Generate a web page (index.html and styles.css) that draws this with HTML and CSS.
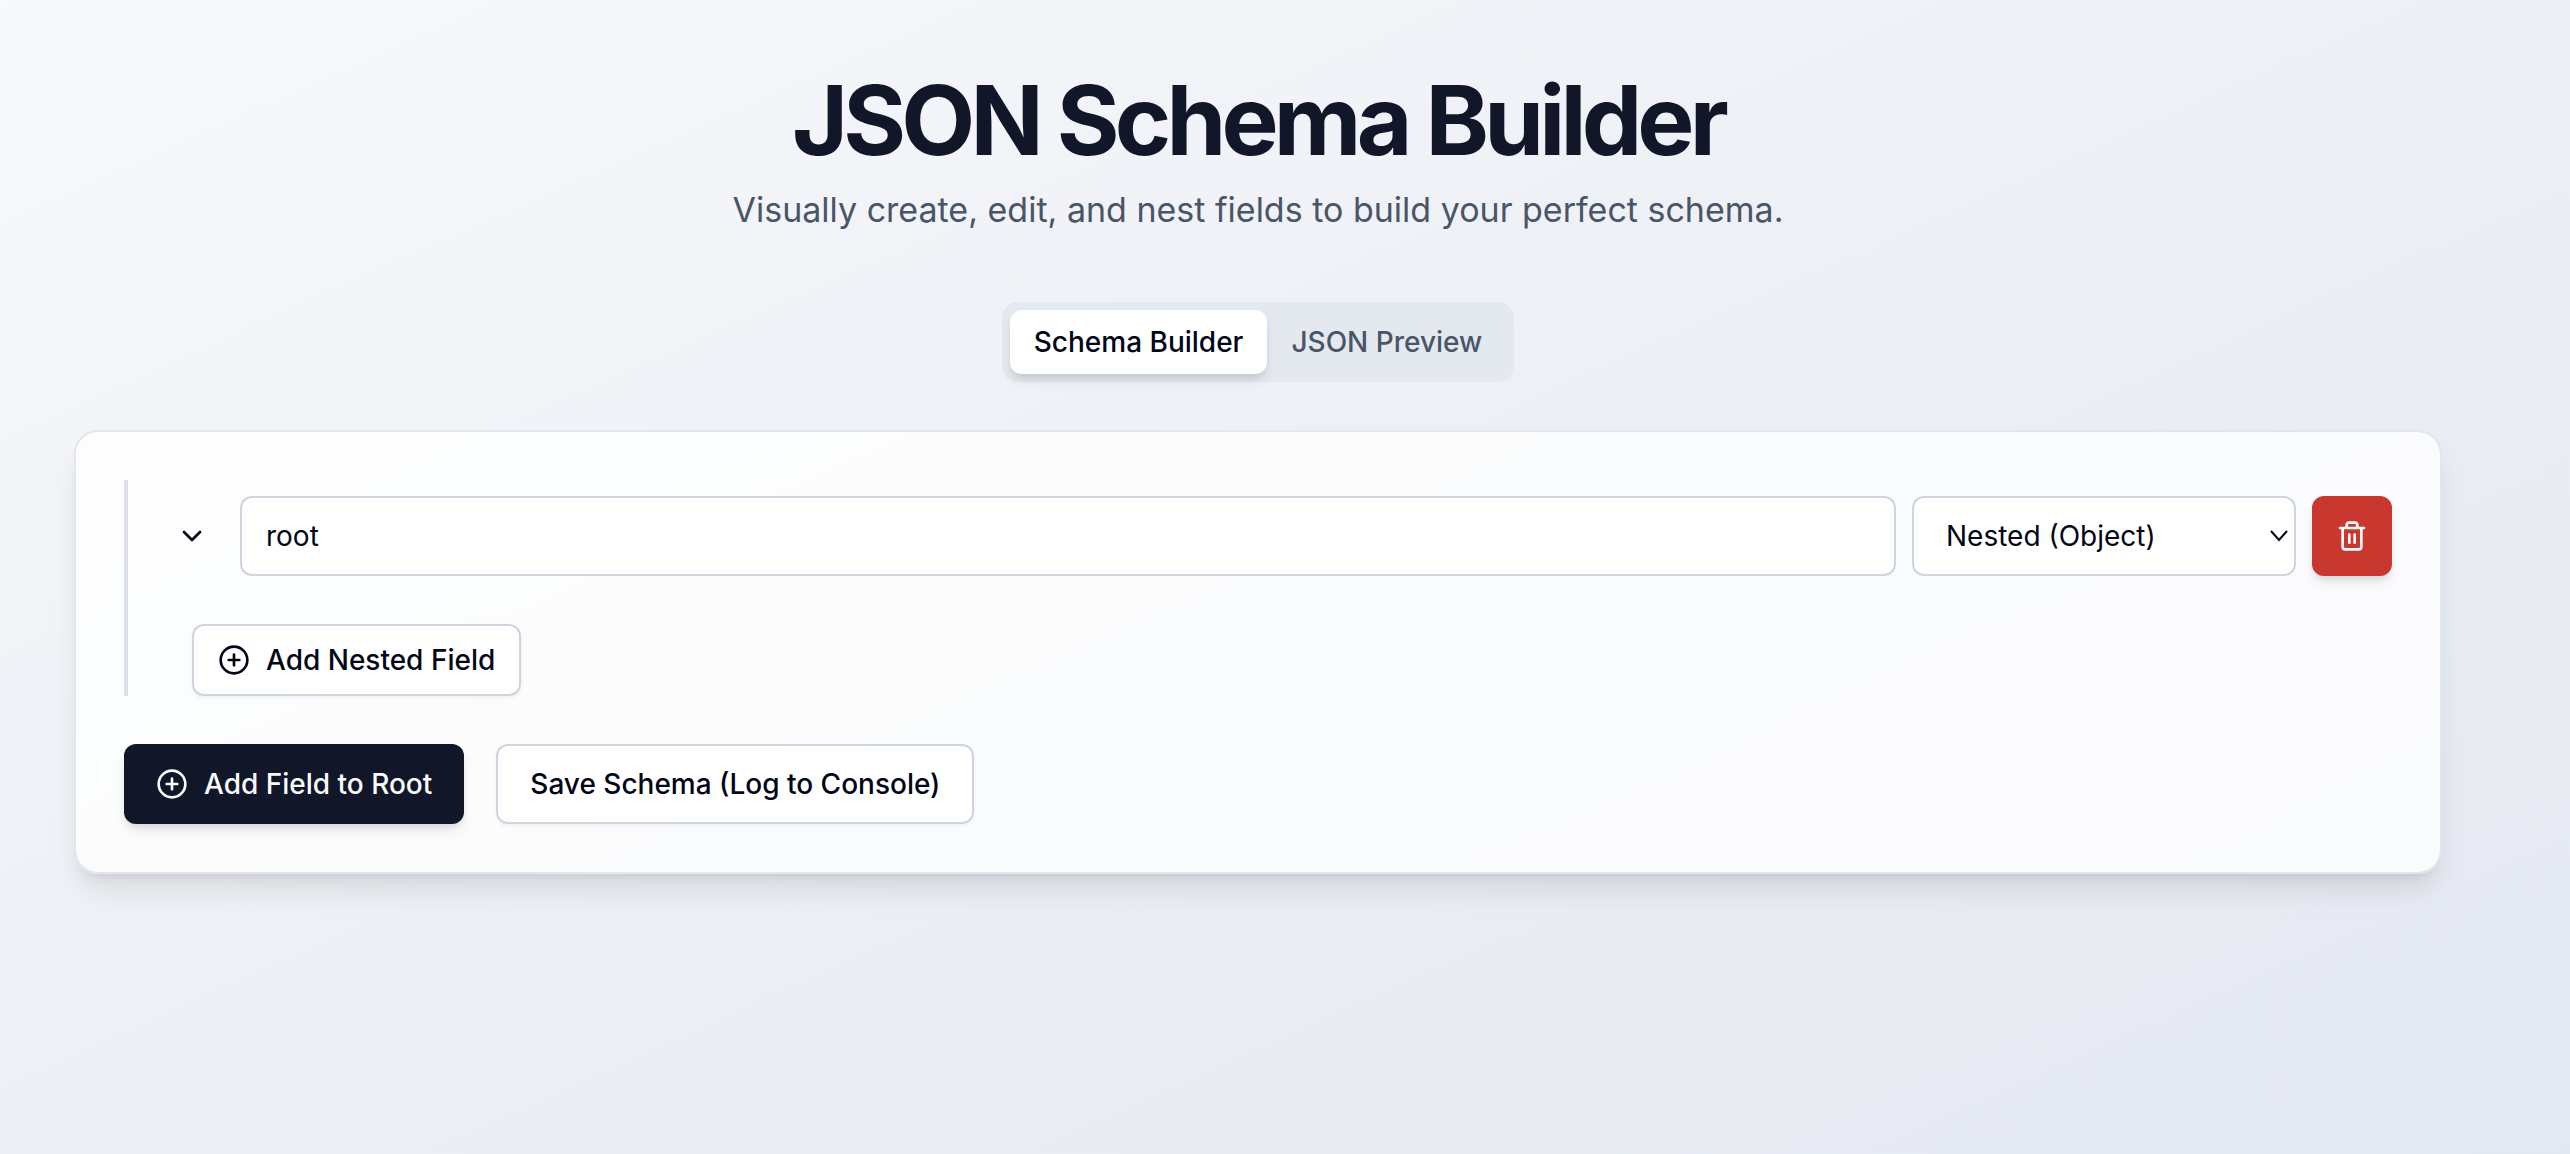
FILE: index.html
```html
<!DOCTYPE html>
<html lang="en">
<head>
<meta charset="utf-8">
<meta name="viewport" content="width=device-width, initial-scale=1">
<title>JSON Schema Builder</title>
<link rel="stylesheet" href="styles.css">
</head>
<body>
<main class="page">
  <header class="header">
    <h1 class="title">JSON Schema Builder</h1>
    <p class="subtitle">Visually create, edit, and nest fields to build your perfect schema.</p>
  </header>

  <div class="tabs" role="tablist">
    <button class="tab tab-active" type="button" role="tab" aria-selected="true">Schema Builder</button>
    <button class="tab" type="button" role="tab" aria-selected="false">JSON Preview</button>
  </div>

  <section class="card">
    <div class="field">
      <div class="field-row">
        <button class="toggle" type="button" aria-label="Collapse field">
          <svg class="icon" viewBox="0 0 24 24"><path d="m6 9 6 6 6-6"/></svg>
        </button>
        <input class="control name" type="text" value="root" aria-label="Field name">
        <div class="select-wrap">
          <select class="control type" aria-label="Field type">
            <option>Nested (Object)</option>
            <option>String</option>
            <option>Number</option>
          </select>
          <svg class="select-arrow" viewBox="0 0 18 12"><path d="m1 1 8 9 8-9"/></svg>
        </div>
        <button class="button delete" type="button" aria-label="Delete field">
          <svg class="icon" viewBox="0 0 24 24"><path d="M3 6h18M19 6v14a2 2 0 0 1-2 2H7a2 2 0 0 1-2-2V6M8 6V4a2 2 0 0 1 2-2h4a2 2 0 0 1 2 2v2M10 11v6M14 11v6"/></svg>
        </button>
      </div>
      <div class="nested">
        <button class="button outline small" type="button">
          <svg class="icon" viewBox="0 0 24 24"><circle cx="12" cy="12" r="10"/><path d="M8 12h8M12 8v8"/></svg>
          Add Nested Field
        </button>
      </div>
    </div>
    <div class="actions">
      <button class="button primary" type="button">
        <svg class="icon" viewBox="0 0 24 24"><circle cx="12" cy="12" r="10"/><path d="M8 12h8M12 8v8"/></svg>
        Add Field to Root
      </button>
      <button class="button outline" type="button">Save Schema (Log to Console)</button>
    </div>
  </section>
</main>
</body>
</html>
```
FILE: styles.css
```css
* {
  box-sizing: border-box;
}

body {
  margin: 0;
  min-height: 100vh;
  background: linear-gradient(to bottom right, #f8f9fd, #eceff4 50%, #e4e8f1);
  color: #020617;
  font-family: Inter, "Liberation Sans", sans-serif;
  font-size: 28px;
  line-height: 40px;
}

button,
input,
select {
  margin: 0;
  font: inherit;
  color: inherit;
}

.page {
  display: flex;
  flex-direction: column;
  align-items: center;
  padding: 72px 128px 64px 74px;
}

.header {
  margin-bottom: 64px;
  text-align: center;
}

.title {
  margin: 0 0 14px;
  color: #121629;
  font-size: 96px;
  font-weight: 700;
  line-height: 96px;
  letter-spacing: -0.05em;
}

.subtitle {
  margin: 0;
  color: #4a5568;
  font-size: 34px;
  line-height: 56px;
}

.tabs {
  display: flex;
  margin-bottom: 48px;
  padding: 8px;
  border-radius: 16px;
  background: #e4e8ef;
}

.tab {
  padding: 12px 24px;
  border: 0;
  border-radius: 12px;
  background: transparent;
  color: #4a5568;
  font-weight: 500;
}

.tab-active {
  background: #fff;
  color: #020617;
  box-shadow: 0 8px 12px -2px rgb(0 0 0 / 10%), 0 4px 8px -4px rgb(0 0 0 / 10%);
}

.card {
  align-self: stretch;
  padding: 48px;
  border: 2px solid #e2e6ed;
  border-radius: 24px;
  background: rgb(255 255 255 / 80%);
  background-clip: padding-box;
  box-shadow: 0 20px 30px -6px rgb(0 0 0 / 10%), 0 8px 12px -8px rgb(0 0 0 / 10%);
}

.field {
  padding: 16px 0 0 32px;
  border-left: 4px solid #dce0e9;
}

.field-row {
  display: flex;
  align-items: center;
  gap: 16px;
}

.icon {
  flex: none;
  width: 32px;
  height: 32px;
  fill: none;
  stroke: currentColor;
  stroke-width: 2;
  stroke-linecap: round;
  stroke-linejoin: round;
}

.toggle {
  display: flex;
  flex: none;
  padding: 16px;
  border: 0;
  background: transparent;
}

.control {
  height: 80px;
  border: 2px solid #cdd4e0;
  border-radius: 12px;
  background: #fff;
}

.name {
  flex: 1;
  min-width: 0;
  padding: 0 24px;
}

.select-wrap {
  position: relative;
  flex: none;
  width: 384px;
}

.type {
  display: block;
  width: 100%;
  padding: 0 32px;
  appearance: none;
}

.select-arrow {
  position: absolute;
  top: 34px;
  right: 8px;
  width: 18px;
  height: 12px;
  fill: none;
  stroke: currentColor;
  stroke-width: 2;
  pointer-events: none;
}

.button {
  display: inline-flex;
  align-items: center;
  justify-content: center;
  gap: 16px;
  height: 80px;
  padding: 0 32px;
  border: 0;
  border-radius: 12px;
  font-weight: 500;
  white-space: nowrap;
}

.delete {
  flex: none;
  width: 80px;
  padding: 0;
  background: #c8382f;
  color: #f8fafc;
  box-shadow: 0 8px 12px -2px rgb(0 0 0 / 10%), 0 4px 8px -4px rgb(0 0 0 / 10%);
}

.outline {
  border: 2px solid #cdd4e0;
  background: #fff;
  box-shadow: 0 2px 4px rgb(0 0 0 / 5%);
}

.small {
  height: 72px;
  padding: 0 24px;
}

.primary {
  background: #121629;
  color: #f8fafc;
  box-shadow: 0 8px 12px -2px rgb(0 0 0 / 10%), 0 4px 8px -4px rgb(0 0 0 / 10%);
}

.nested {
  display: flex;
  padding: 48px 0 0 32px;
}

.actions {
  display: flex;
  flex-wrap: wrap;
  gap: 32px;
  margin-top: 48px;
}
```
